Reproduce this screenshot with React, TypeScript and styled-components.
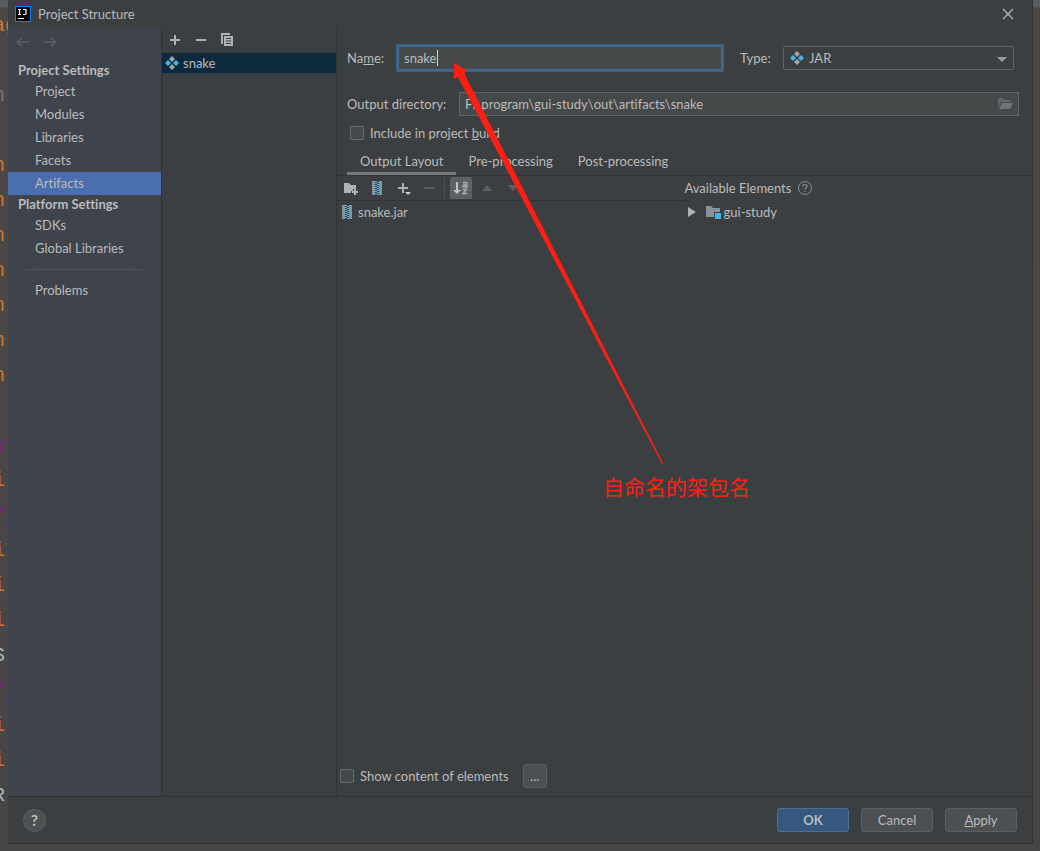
import React from 'react';
import styled, { createGlobalStyle, css } from 'styled-components';

const Global = createGlobalStyle`
  * { box-sizing: border-box; }
  body { margin: 0; background: #4b4a49; }
  body, button, input, select {
    font-family: Lato, "Noto Sans CJK SC", sans-serif;
    font-variant-ligatures: none;
    font-size: 13px;
    line-height: 18px;
    color: #bbbbbb;
  }
  button { border: 0; padding: 0; background: none; cursor: pointer; }
  svg { display: block; flex: none; }
`;

const Desktop = styled.div`
  position: relative;
  display: grid;
  grid-template-columns: 8px minmax(0, 1fr) 7px;
  min-height: 100vh;
  padding-bottom: 7px;
  background: linear-gradient(#5b5c5d 0 7px, #4b4744 8px, #494746 60%, #464545);
`;
const CodeStrip = styled.div`
  height: 0;
  min-height: 100%;
  overflow: hidden;
  padding-top: 8px;
`;
const CodeLine = styled.div<{ $color: string; $italic?: boolean }>`
  height: 35px;
  margin-left: -7px;
  font: ${p => (p.$italic ? 'italic ' : '')}20px/35px "Liberation Mono", monospace;
  color: ${p => p.$color};
  white-space: pre;
`;

const Dialog = styled.main`
  display: flex;
  flex-direction: column;
  background: #3c3f41;
  border: 1px solid #323335;
  border-width: 0 1px 1px 0;
`;
const TitleBar = styled.header`
  display: flex;
  align-items: center;
  gap: 7px;
  height: 28px;
  padding: 0 18px 0 7px;
`;
const Title = styled.h1`
  flex: 1;
  margin: 0;
  font-size: 13px;
  font-weight: 400;
`;
const Body = styled.div`
  flex: 1;
  display: flex;
`;

const Sidebar = styled.nav`
  width: 154px;
  flex: none;
  background: #3e434c;
  border-right: 1px solid #323335;
`;
const History = styled.div`
  display: flex;
  align-items: flex-start;
  gap: 13px;
  padding: 7px 8px 0;
  height: 33px;
`;
const Heading = styled.h2`
  margin: 0;
  padding-left: 10px;
  font-size: 13px;
  line-height: 19px;
  font-weight: 700;
`;
const NavLink = styled.a<{ $active?: boolean }>`
  display: block;
  padding-left: 27px;
  line-height: 23px;
  color: inherit;
  text-decoration: none;
  background: ${p => (p.$active ? '#4b6eaf' : 'none')};
`;
const Divider = styled.hr`
  height: 1px;
  margin: 9px 6px;
  border: 0;
  background: linear-gradient(90deg, transparent, #55585c 20% 80%, transparent);
`;

const ListPane = styled.section`
  width: 175px;
  flex: none;
  border-right: 1px solid #323335;
`;
const ListTools = styled.div`
  display: flex;
  align-items: center;
  gap: 10px;
  height: 25px;
  padding: 0 0 2px 5px;
`;
const ListItem = styled.button`
  display: flex;
  align-items: center;
  gap: 4px;
  width: 100%;
  height: 20px;
  padding-left: 3px;
  background: #0d293e;
`;

const Editor = styled.section`
  flex: 1;
  min-width: 0;
  display: flex;
  flex-direction: column;
`;
const Form = styled.div`
  padding: 16px 13px 0 10px;
`;
const NameRow = styled.div`
  display: flex;
  align-items: center;
  height: 28px;
  padding-right: 5px;
`;
const NameLabel = styled.label`
  width: 49px;
`;
const NameBox = styled.span`
  flex: 1;
  position: relative;
`;
const NameInput = styled.input`
  display: block;
  width: 100%;
  height: 28px;
  padding: 0 6px;
  border: 2px solid #3d6185;
  outline: 1px solid #466d94;
  outline-offset: -3px;
  background: #45494a;
`;
const Caret = styled.span`
  position: absolute;
  left: 41px;
  top: 6px;
  width: 1px;
  height: 16px;
  background: #d0d0d0;
`;
const TypeLabel = styled.label`
  width: 59px;
  padding-left: 16px;
`;
const SelectBox = styled.span`
  position: relative;
  width: 231px;
  & > svg { position: absolute; pointer-events: none; }
  & > svg:first-child { left: 7px; top: 5px; }
  & > svg:last-child { right: 6px; top: 9px; }
`;
const Select = styled.select`
  display: block;
  appearance: none;
  width: 100%;
  height: 24px;
  padding: 0 25px;
  border: 1px solid #646464;
  border-radius: 2px;
  background: #3c3f41;
`;
const DirRow = styled.div`
  display: flex;
  align-items: center;
  margin-top: 20px;
`;
const DirLabel = styled.label`
  width: 112px;
`;
const DirBox = styled.span`
  flex: 1;
  display: flex;
  align-items: center;
  height: 24px;
  padding-right: 5px;
  border: 1px solid #646464;
  background: #45494a;
`;
const DirInput = styled.input`
  flex: 1;
  border: 0;
  padding: 0 5px;
  background: none;
`;
const Check = styled.label`
  display: flex;
  align-items: center;
  gap: 6px;
`;
const BuildCheck = styled(Check)`
  margin-top: 8px;
  padding-left: 3px;
`;
const Box = styled.input`
  appearance: none;
  width: 14px;
  height: 14px;
  margin: 0;
  border: 1px solid #6b6b6b;
  border-radius: 1px;
  background: #43494a;
`;
const Tabs = styled.div`
  display: flex;
  height: 34px;
  padding-left: 10px;
  border-bottom: 1px solid #323335;
`;
const Tab = styled.button<{ $active?: boolean }>`
  padding: 7px 12px 0 13px;
  border-bottom: 3px solid ${p => (p.$active ? '#747a80' : 'transparent')};
`;
const Panels = styled.div`
  flex: 1;
  display: grid;
  grid-template-columns: 1fr 1fr;
`;
const Toolbar = styled.div`
  display: flex;
  align-items: center;
  height: 25px;
  padding-left: 3px;
  border-bottom: 1px solid #323335;
`;
const Tool = styled.button<{ $pressed?: boolean }>`
  display: flex;
  align-items: center;
  justify-content: center;
  width: 22px;
  height: 22px;
  margin-right: 4px;
  border-radius: 2px;
  background: ${p => (p.$pressed ? '#5c6164' : 'none')};
`;
const Separator = styled.span`
  width: 1px;
  height: 20px;
  margin-right: 5px;
  background: #515151;
`;
const TreeRow = styled.div<{ $gap: number }>`
  display: flex;
  align-items: center;
  height: 22px;
  gap: ${p => p.$gap}px;
`;
const JarRow = styled(TreeRow)`
  padding-left: 4px;
`;
const Expander = styled.button`
  width: 17px;
`;
const Available = styled.div`
  display: flex;
  align-items: center;
  gap: 7px;
  height: 25px;
  padding-bottom: 1px;
`;
const ShowRow = styled.div`
  display: flex;
  align-items: center;
  gap: 14px;
  padding: 0 0 8px 3px;
`;
const raised = css`
  border: 1px solid #5e6060;
  border-radius: 3px;
  background: #4c5052;
`;
const MoreButton = styled.button`
  ${raised}
  width: 24px;
  height: 24px;
`;
const Footer = styled.footer`
  display: flex;
  align-items: center;
  gap: 12px;
  height: 47px;
  padding: 0 15px;
  border-top: 1px solid #323335;
`;
const HelpButton = styled.button`
  width: 23px;
  height: 23px;
  margin-right: auto;
  border: 1px solid #5e6060;
  border-radius: 50%;
  background: #4c5052;
  font-size: 16px;
  font-weight: 700;
`;
const Button = styled.button<{ $primary?: boolean }>`
  ${raised}
  width: 72px;
  height: 24px;
  ${p => p.$primary && css`
    background: #365880;
    border-color: #4c708c;
    font-weight: 700;
  `}
`;
const Annotation = styled.div`
  position: absolute;
  left: 452px;
  top: 62px;
  pointer-events: none;
`;
const Note = styled.p`
  margin: 5px 0 0 151px;
  font-size: 21px;
  line-height: 30px;
  font-weight: 400;
  font-family: "Noto Sans CJK SC", sans-serif;
  color: #ff1f12;
  white-space: nowrap;
`;

const code: { t: string; c: string; i?: boolean }[] = [
  { t: 'ag', c: '#cc7832' }, { t: ' ', c: '#888' }, { t: "n'", c: '#77777a' }, { t: ' ', c: '#888' },
  ...Array.from({ length: 7 }, () => ({ t: "n'", c: '#cc7832' })),
  { t: ' ', c: '#888' }, { t: 'x', c: '#871094', i: true }, { t: 'i', c: '#cc7832' },
  { t: '/,', c: '#871094', i: true }, { t: 'i', c: '#cc7832' }, { t: 'i', c: '#cc7832' },
  { t: 'i', c: '#cc7832' }, { t: "S'", c: '#a9b7c6' }, { t: '/,', c: '#871094', i: true },
  { t: 'i', c: '#cc7832' }, { t: 'i', c: '#cc7832' }, { t: 'R.', c: '#a9b7c6' },
];

const Logo = () => (
  <svg width="16" height="16" viewBox="0 0 16 16">
    <rect x=".5" y=".5" width="15" height="15" fill="#080808" stroke="#127df2" />
    <path d="M3 3.500h3M4.500 3.500v5M3 8.500h3M8 3.500h3v4q0 1-1 1H8M3 12.500h6" fill="none" stroke="#fff" strokeWidth="1.200" />
  </svg>
);
const Arrow = ({ flip }: { flip?: boolean }) => (
  <svg width="14" height="14" viewBox="0 0 14 14" transform={flip ? 'scale(-1 1)' : undefined}>
    <path d="M13.500 7H1.500M6 2.500 1.500 7 6 11.500" fill="none" stroke="#5c5f62" strokeWidth="1.600" />
  </svg>
);
const Artifact = () => (
  <svg width="14" height="14" viewBox="0 0 14 14">
    <path d="m7 0 3 3-3 3-3-3zM7 8l3 3-3 3-3-3z" fill="#9aa7b0" />
    <path d="m3 4 3 3-3 3-3-3zM11 4l3 3-3 3-3-3z" fill="#40b6e0" />
  </svg>
);
const Plus = ({ menu }: { menu?: boolean }) => (
  <svg width="16" height="16" viewBox="0 0 16 16">
    <path d="M3 8h10M8 3v10" stroke="#afb1b3" strokeWidth="2" />
    {menu && <path d="M10 12h6l-3 3z" fill="#d0d0d0" />}
  </svg>
);
const Minus = ({ dim }: { dim?: boolean }) => (
  <svg width="16" height="16" viewBox="0 0 16 16">
    <path d="M3 8h10" stroke={dim ? '#5d6062' : '#afb1b3'} strokeWidth="2" />
  </svg>
);
const Copy = () => (
  <svg width="16" height="16" viewBox="0 0 16 16">
    <path d="M2 1h9v2H4v9H2z" fill="#afb1b3" />
    <path d="M5 4h9v10H5zM7 6v1h5V6zM7 8.500v1h5v-1zM7 11v1h5v-1z" fill="#afb1b3" fillRule="evenodd" />
  </svg>
);
const Jar = () => (
  <svg width="12" height="14" viewBox="0 0 12 14">
    <path d="M1 0h3v14H1zM8 0h3v14H8z" fill="#87939a" />
    <path d="M5 0v14M7 1v13" stroke="#40b6e0" strokeWidth="2" strokeDasharray="1 1" />
  </svg>
);
const NewFolder = () => (
  <svg width="16" height="16" viewBox="0 0 16 16">
    <path d="M1 3h5l2 2h5v4h-3v2H8v2H1z" fill="#afb1b3" />
    <path d="M12 9v6M9 12h6" stroke="#afb1b3" strokeWidth="2" />
  </svg>
);
const OpenFolder = () => (
  <svg width="16" height="16" viewBox="0 0 16 16">
    <path d="M1 12V2h5l2 2h6v2H4z" fill="#5f6568" />
    <path d="M5 7h11l-3 6H2z" fill="#6e7477" />
  </svg>
);
const Sort = () => (
  <svg width="16" height="16" viewBox="0 0 16 16">
    <path d="M4 2v9" stroke="#c0c2c4" strokeWidth="2" />
    <path d="M0 10h8l-4 4z" fill="#c0c2c4" />
    <path d="M10 2.500h3q1 0 1 1v3.500h-3q-1-.2-1-1t1-1h3M10 9.500h3.500L10 13.500h4" fill="none" stroke="#afb1b3" strokeWidth="1.300" />
  </svg>
);
const Triangle = ({ d, color }: { d: string; color: string }) => (
  <svg width="12" height="8" viewBox="0 0 12 8" overflow="visible"><path d={d} fill={color} /></svg>
);
const Module = () => (
  <svg width="16" height="16" viewBox="0 0 16 16">
    <path d="M1 2h5l2 2h7v4H9v5H1z" fill="#87939a" />
    <path d="M10 9h6v6h-6z" fill="#40b6e0" />
  </svg>
);
const Question = () => (
  <svg width="14" height="14" viewBox="0 0 14 14" fill="none" stroke="#8b8f92">
    <circle cx="7" cy="7" r="6.500" />
    <path d="M5 5.500q0-2 2-2t2 1.800Q9 6.400 7 7.500V8.500M7 9.800V11" strokeWidth="1.200" />
  </svg>
);

export default function App() {
  return (
    <Desktop>
      <Global />
      <CodeStrip aria-hidden="true">
        {code.map((l, n) => <CodeLine key={n} $color={l.c} $italic={l.i}>{l.t}</CodeLine>)}
      </CodeStrip>
      <Dialog>
        <TitleBar>
          <Logo />
          <Title>Project Structure</Title>
          <button aria-label="Close">
            <svg width="12" height="12" viewBox="0 0 12 12"><path d="m1 1 10 10M11 1 1 11" stroke="#b8b8b8" strokeWidth="1.200" /></svg>
          </button>
        </TitleBar>
        <Body>
          <Sidebar>
            <History>
              <button aria-label="Back"><Arrow /></button>
              <button aria-label="Forward"><Arrow flip /></button>
            </History>
            <Heading>Project Settings</Heading>
            <NavLink href="#project">Project</NavLink>
            <NavLink href="#modules">Modules</NavLink>
            <NavLink href="#libraries">Libraries</NavLink>
            <NavLink href="#facets">Facets</NavLink>
            <NavLink href="#artifacts" $active>Artifacts</NavLink>
            <Heading>Platform Settings</Heading>
            <NavLink href="#sdks">SDKs</NavLink>
            <NavLink href="#global">Global Libraries</NavLink>
            <Divider />
            <NavLink href="#problems">Problems</NavLink>
          </Sidebar>
          <ListPane>
            <ListTools>
              <button aria-label="Add"><Plus /></button>
              <button aria-label="Remove"><Minus /></button>
              <button aria-label="Copy"><Copy /></button>
            </ListTools>
            <ListItem><Artifact />snake</ListItem>
          </ListPane>
          <Editor>
            <Form>
              <NameRow>
                <NameLabel htmlFor="name">Na<u>m</u>e:</NameLabel>
                <NameBox><NameInput id="name" defaultValue="snake" /><Caret /></NameBox>
                <TypeLabel htmlFor="type">Type:</TypeLabel>
                <SelectBox>
                  <Artifact />
                  <Select id="type"><option>JAR</option></Select>
                  <Triangle d="M1 2h10L6 7z" color="#9c9fa1" />
                </SelectBox>
              </NameRow>
              <DirRow>
                <DirLabel htmlFor="dir">Output directory:</DirLabel>
                <DirBox>
                  <DirInput id="dir" defaultValue="F:\program\gui-study\out\artifacts\snake" />
                  <button aria-label="Browse"><OpenFolder /></button>
                </DirBox>
              </DirRow>
              <BuildCheck><Box type="checkbox" /><span>Include in project <u>b</u>uild</span></BuildCheck>
            </Form>
            <Tabs>
              <Tab $active>Output Layout</Tab>
              <Tab>Pre-processing</Tab>
              <Tab>Post-processing</Tab>
            </Tabs>
            <Panels>
              <div>
                <Toolbar>
                  <Tool aria-label="New folder"><NewFolder /></Tool>
                  <Tool aria-label="New archive"><Jar /></Tool>
                  <Tool aria-label="Add copy"><Plus menu /></Tool>
                  <Tool aria-label="Remove element"><Minus dim /></Tool>
                  <Separator />
                  <Tool aria-label="Sort" $pressed><Sort /></Tool>
                  <Tool aria-label="Move up"><Triangle d="M1 7h10L6 1z" color="#5d6062" /></Tool>
                  <Tool aria-label="Move down"><Triangle d="M1 1h10L6 7z" color="#5d6062" /></Tool>
                </Toolbar>
                <JarRow $gap={5}><Jar /><span>snake.jar</span></JarRow>
              </div>
              <div>
                <Available>Available Elements <Question /></Available>
                <TreeRow $gap={3}>
                  <Expander aria-label="Expand"><Triangle d="M3 -1v10l8-5z" color="#afb1b3" /></Expander>
                  <Module />
                  <span>gui-study</span>
                </TreeRow>
              </div>
            </Panels>
            <ShowRow>
              <Check><Box type="checkbox" />Show content of elements</Check>
              <MoreButton>...</MoreButton>
            </ShowRow>
          </Editor>
        </Body>
        <Footer>
          <HelpButton>?</HelpButton>
          <Button $primary>OK</Button>
          <Button>Cancel</Button>
          <Button><u>A</u>pply</Button>
        </Footer>
      </Dialog>
      <Annotation>
        <svg width="212" height="404" viewBox="0 0 212 404"><path d="M2 1 16 9l-4 2L211 401l-1 1L6 15l-4 2z" fill="#ff1f12" /></svg>
        <Note>自命名的架包名</Note>
      </Annotation>
    </Desktop>
  );
}
